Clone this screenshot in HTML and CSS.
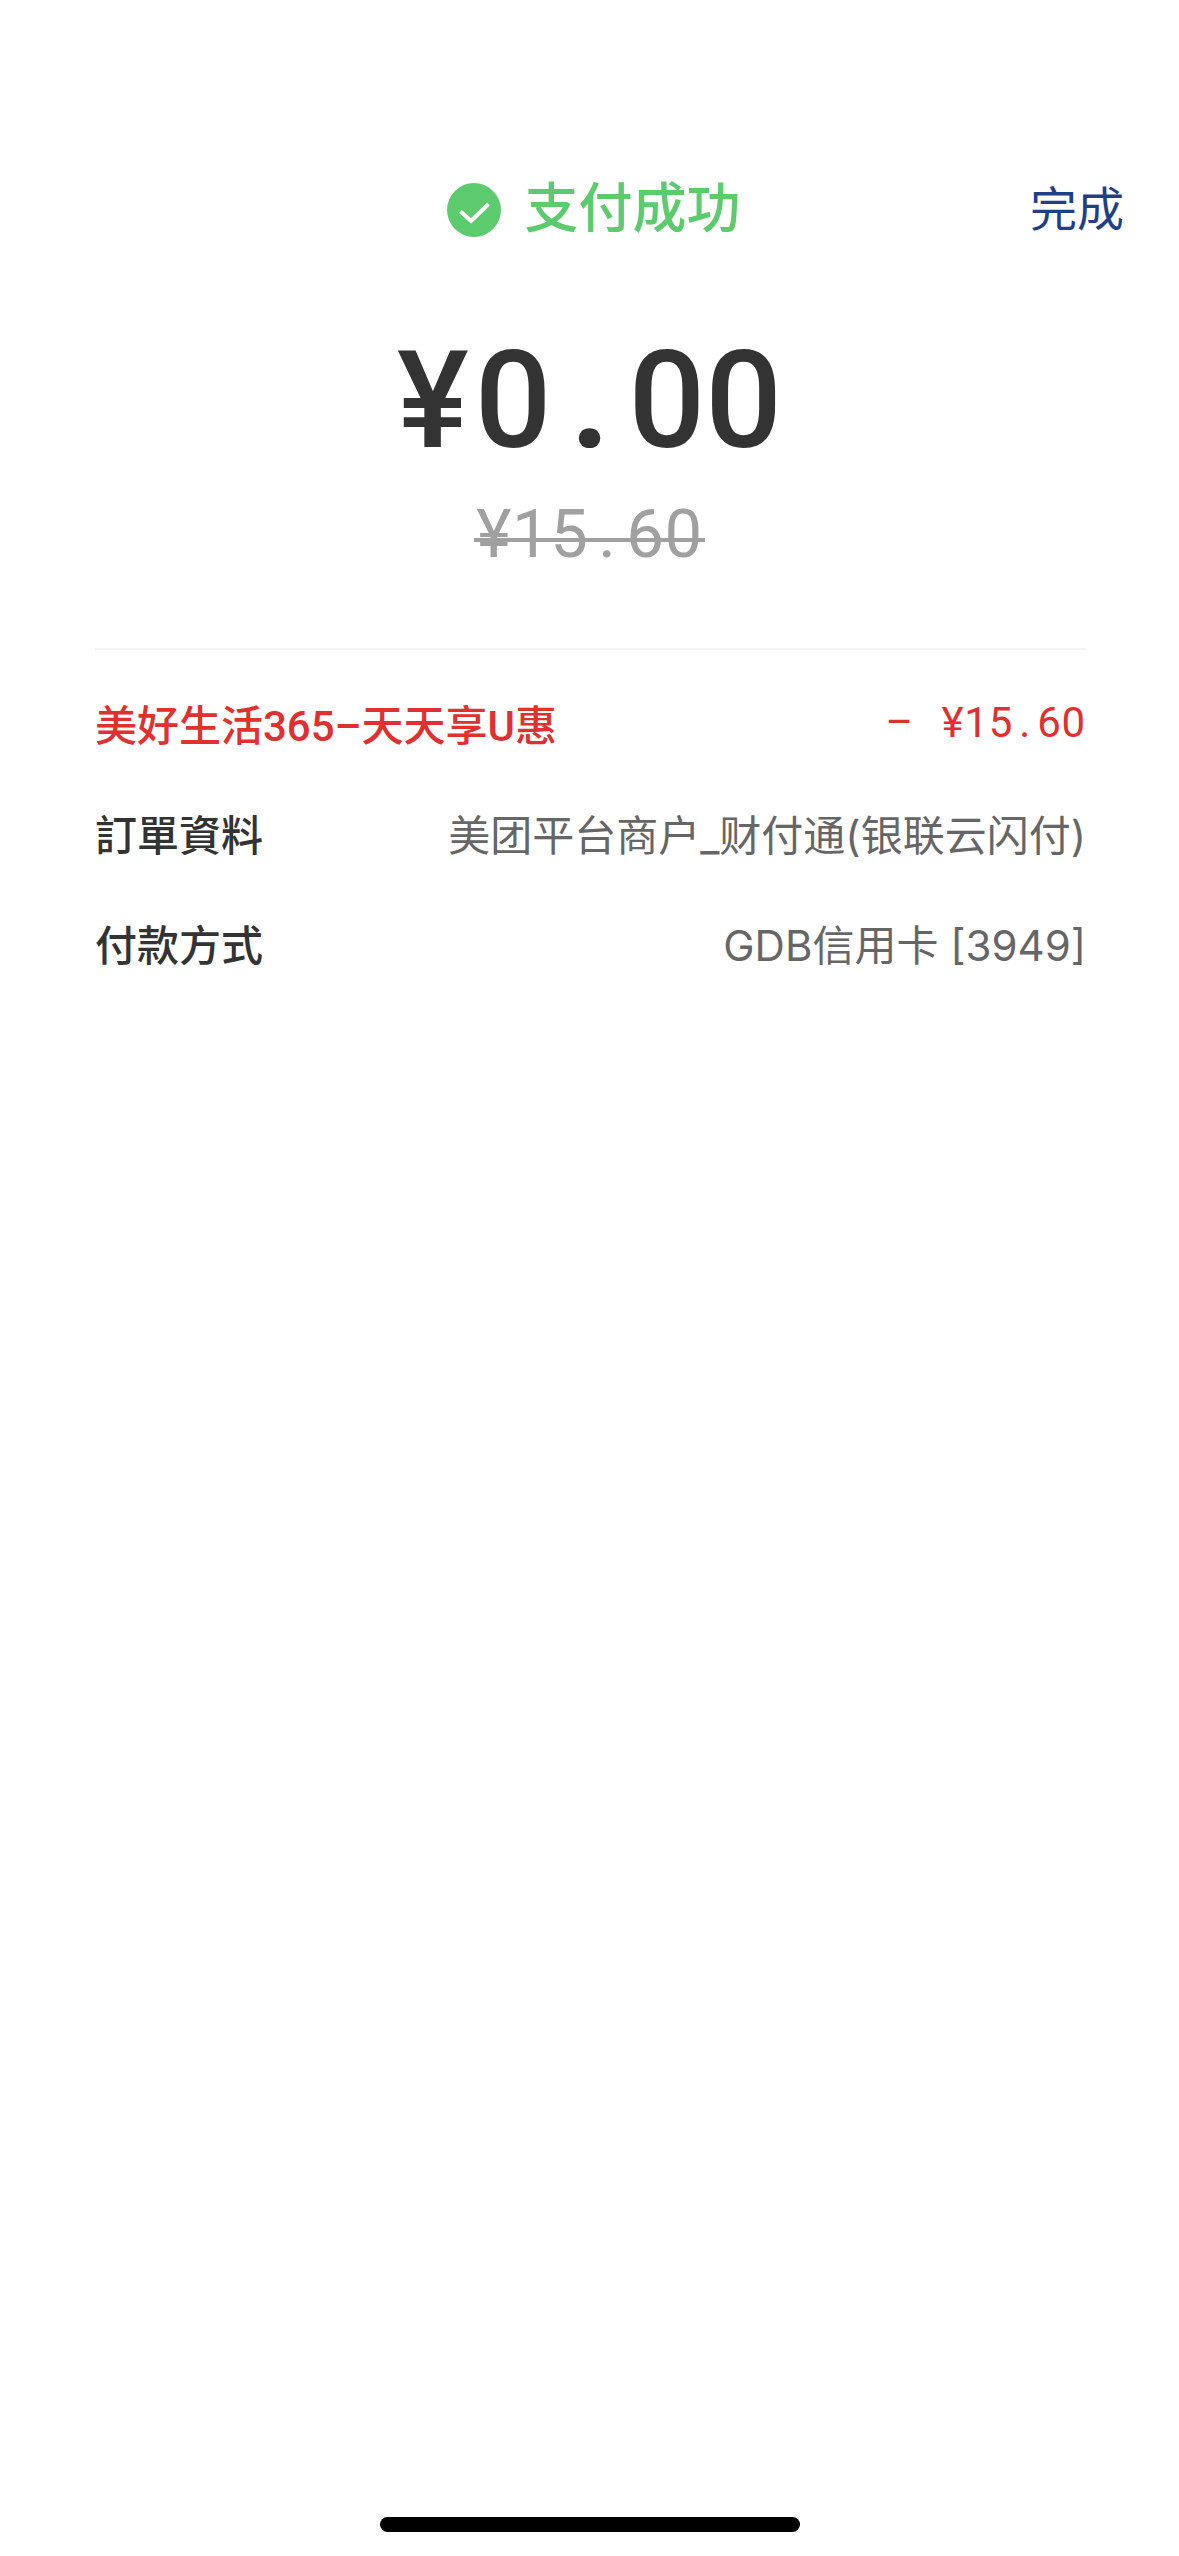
FILE: index.html
```html
<!DOCTYPE html>
<html>

<head>
    <meta charset="UTF-8">
    <title>支付成功</title>
    <link rel="stylesheet" href="styles.css">
</head>

<body>
    <div class="page">
        <div class="header">
            <div class="status">
                <svg class="status-icon" viewBox="0 0 54 54" width="54" height="54">
                    <circle cx="27" cy="27" r="27" fill="#5ccb6d" />
                    <path d="M13.500 28.500L24 38L41.500 21" fill="none" stroke="#fff" stroke-width="4" />
                </svg>
                <span class="status-text">支付成功</span>
            </div>
            <div class="done">完成</div>
        </div>
        <div class="amount"><span class="yen">¥</span>0<span class="dot">.</span>00</div>
        <div class="original"><span class="strike">¥15<span class="dot">.</span>60</span></div>
        <div class="details">
            <div class="row promo">
                <span class="label">美好生活365–天天享U惠</span>
                <span class="discount"><span class="minus">–</span>¥15<span class="dot">.</span>60</span>
            </div>
            <div class="row">
                <span class="label tc">訂單資料</span>
                <span class="value">美团平台商户_财付通(银联云闪付)</span>
            </div>
            <div class="row">
                <span class="label tc">付款方式</span>
                <span class="value">GDB信用卡 [3949]</span>
            </div>
        </div>
        <div class="home-bar"></div>
    </div>
</body>

</html>
```

FILE: styles.css
```css
body {
    margin: 0;
    background: #fff;
    font-family: Roboto, "Noto Sans CJK SC", sans-serif;
}

.page {
    width: 1179px;
    height: 2556px;
    box-sizing: border-box;
    padding-top: 180px;
    display: flex;
    flex-direction: column;
    overflow: hidden;
}

.header {
    display: grid;
    grid-template-columns: 1fr auto 1fr;
    align-items: center;
    height: 60px;
    padding: 0 55px 0 63px;
}

.status {
    grid-column: 2;
    display: flex;
    align-items: center;
    gap: 24px;
}

.status-icon {
    display: block;
}

.status-text {
    font-size: 54px;
    line-height: 60px;
    font-weight: 500;
    color: #5ccb6d;
}

.done {
    grid-column: 3;
    justify-self: end;
    font-size: 47px;
    line-height: 60px;
    color: #1f3f8a;
}

.amount {
    margin-top: 91px;
    text-align: center;
    font-size: 135px;
    line-height: 140px;
    font-weight: 500;
    color: #333;
}

.amount .yen {
    margin-right: 6px;
}

.amount .dot {
    display: inline-block;
    width: 77px;
    text-align: center;
    font-weight: 700;
}

.original {
    margin-top: 23px;
    text-align: center;
    font-size: 67px;
    line-height: 80px;
    letter-spacing: 0.5px;
    color: #a0a0a0;
}

.strike {
    position: relative;
    display: inline-block;
}

.strike::after {
    content: "";
    position: absolute;
    left: -2px;
    right: -2px;
    top: 44px;
    height: 4px;
    background: #a0a0a0;
}

.original .dot {
    display: inline-block;
    width: 38px;
    text-align: center;
}

.details {
    margin: 74px 93px 0 95px;
    padding-top: 17px;
    border-top: 2px solid #f3f3f3;
}

.row {
    display: flex;
    justify-content: space-between;
    align-items: center;
    height: 110px;
    font-size: 42px;
    color: #666;
}

.label {
    font-weight: 500;
    color: #333;
}

.value {
    font-family: Inter, "Noto Sans CJK SC", sans-serif;
}

.tc {
    font-family: Roboto, "Noto Sans CJK TC", sans-serif;
}

.promo .label,
.promo .discount {
    color: #e03030;
}

.discount {
    letter-spacing: 0.8px;
}

.discount .dot {
    display: inline-block;
    width: 24px;
    text-align: center;
}

.minus {
    display: inline-block;
    width: 56px;
}

.home-bar {
    margin: auto auto 24px;
    width: 420px;
    height: 15px;
    border-radius: 8px;
    background: #000;
}
```
